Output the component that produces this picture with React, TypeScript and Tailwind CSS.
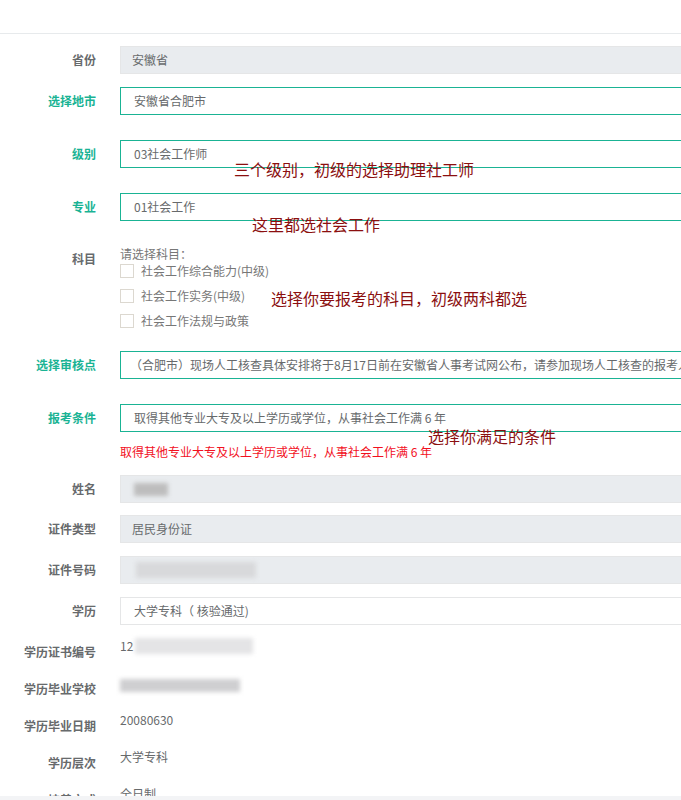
import React from "react";

const font = { fontFamily: '"Noto Sans CJK SC", "Noto Sans", sans-serif' };

function Label({ text, green, className = "" }: { text: string; green?: boolean; className?: string }) {
  return (
    <div
      className={`w-[96px] shrink-0 text-right text-[12px] font-bold leading-[16px] ${green ? "text-[#1ab394]" : "text-[#676a6c]"} ${className}`}
    >
      {text}
    </div>
  );
}

function Box({ children, variant }: { children?: React.ReactNode; variant: "gray" | "green" | "plain" }) {
  const cls =
    variant === "gray"
      ? "bg-[#e9ecef] border-[#e5e6e7] pl-[11px]"
      : variant === "green"
      ? "bg-white border-[#1ab394] pl-[13px]"
      : "bg-white border-[#e5e6e7] pl-[13px]";
  return (
    <div className={`ml-[24px] h-[28px] w-[700px] shrink-0 border flex items-center text-[12px] text-[#676a6c] whitespace-nowrap overflow-hidden ${cls}`}>
      {children}
    </div>
  );
}

function InputRow({ label, green, variant, children, className = "" }: { label: string; green?: boolean; variant: "gray" | "green" | "plain"; children?: React.ReactNode; className?: string }) {
  return (
    <div className={`flex items-center ${className}`}>
      <Label text={label} green={green} />
      <Box variant={variant}>{children}</Box>
    </div>
  );
}

function Check({ text }: { text: string }) {
  return (
    <div className="flex items-center h-[18px] gap-[7px]">
      <div className="w-[14px] h-[14px] border border-[#dcd8d0] bg-white" />
      <span className="text-[12px] text-[#777] leading-[16px]">{text}</span>
    </div>
  );
}

function TextRow({ label, children, className = "" }: { label: string; children?: React.ReactNode; className?: string }) {
  return (
    <div className={`flex items-start h-[22px] ${className}`}>
      <Label text={label} className="pt-[6px] leading-[16px] box-content" />
      <div className="ml-[24px] text-[12px] leading-[16px] text-[#676a6c] flex items-center">{children}</div>
    </div>
  );
}

function Blur({ className }: { className: string }) {
  return <div className={`blur-[2px] ${className}`} />;
}

function Note({ text, className }: { text: string; className: string }) {
  return (
    <div className={`absolute text-[16px] leading-[18px] text-[#8b0f0f] whitespace-nowrap ${className}`}>{text}</div>
  );
}

export default function App() {
  return (
    <div className="relative w-[681px] h-[800px] overflow-hidden bg-white" style={font}>
      <div className="h-[34px] border-b border-[#e7eaec]" />
      <InputRow label="省份" variant="gray" className="mt-[12px]">安徽省</InputRow>
      <InputRow label="选择地市" green variant="green" className="mt-[13px]">安徽省合肥市</InputRow>
      <InputRow label="级别" green variant="green" className="mt-[25px]">03社会工作师</InputRow>
      <InputRow label="专业" green variant="green" className="mt-[25px]">01社会工作</InputRow>

      <div className="flex items-start mt-[25px]">
        <Label text="科目" className="pt-[5px] box-content" />
        <div className="ml-[24px] flex flex-col gap-[7px]">
          <div className="text-[12px] leading-[16px] text-[#777] -mb-[7px]">请选择科目：</div>
          <Check text="社会工作综合能力(中级)" />
          <Check text="社会工作实务(中级)" />
          <Check text="社会工作法规与政策" />
        </div>
      </div>

      <InputRow label="选择审核点" green variant="green" className="mt-[21px]">
        <span className="-ml-[4px]">（合肥市）现场人工核查具体安排将于8月17日前在安徽省人事考试网公布，请参加现场人工核查的报考人员</span>
      </InputRow>
      <InputRow label="报考条件" green variant="green" className="mt-[25px]">
        取得其他专业大专及以上学历或学位，从事社会工作满 6 年
      </InputRow>
      <div className="mt-[12px] pl-[120px] text-[12px] leading-[16px] text-[#f2101e]">
        取得其他专业大专及以上学历或学位，从事社会工作满 6 年
      </div>

      <InputRow label="姓名" variant="gray" className="mt-[15px]">
        <Blur className="ml-[2px] w-[34px] h-[13px] bg-[#bdbdbd]" />
      </InputRow>
      <InputRow label="证件类型" variant="gray" className="mt-[12px]">居民身份证</InputRow>
      <InputRow label="证件号码" variant="gray" className="mt-[13px]">
        <Blur className="ml-[4px] w-[120px] h-[16px] bg-[#d8d9db]" />
      </InputRow>
      <InputRow label="学历" variant="plain" className="mt-[13px]">大学专科（ 核验通过)</InputRow>

      <TextRow label="学历证书编号" className="mt-[13px]">
        <span>12</span>
        <Blur className="ml-[2px] w-[118px] h-[16px] bg-[#e4e4e6]" />
      </TextRow>
      <TextRow label="学历毕业学校" className="mt-[15px]">
        <Blur className="mt-[4px] w-[120px] h-[13px] bg-[#cfcfd1]" />
      </TextRow>
      <TextRow label="学历毕业日期" className="mt-[15px]">20080630</TextRow>
      <TextRow label="学历层次" className="mt-[15px]">大学专科</TextRow>
      <TextRow label="培养方式" className="mt-[15px]">全日制</TextRow>

      <div className="absolute left-0 right-0 bottom-0 h-[4px] bg-[#f3f4f6]" />

      <Note text="三个级别，初级的选择助理社工师" className="left-[234px] top-[160px]" />
      <Note text="这里都选社会工作" className="left-[252px] top-[215px]" />
      <Note text="选择你要报考的科目，初级两科都选" className="left-[271px] top-[289px]" />
      <Note text="选择你满足的条件" className="left-[428px] top-[427px]" />
    </div>
  );
}
